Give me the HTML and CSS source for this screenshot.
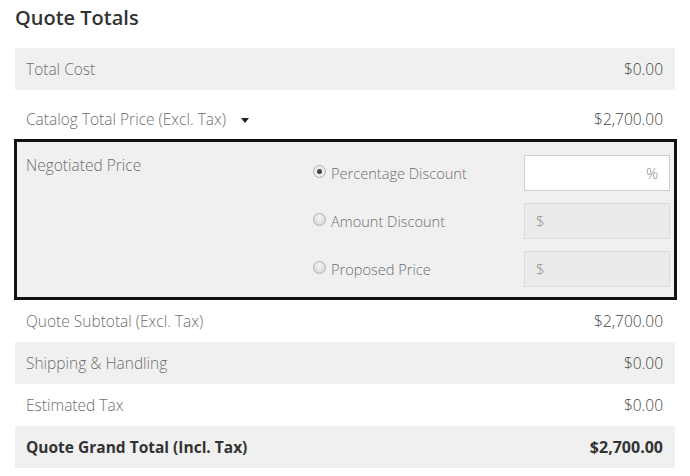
FILE: index.html
```html
<!DOCTYPE html>
<html>
<head>
<meta charset="utf-8">
<link rel="stylesheet" href="styles.css">
</head>
<body>
<div class="totals">
  <h2 class="title">Quote Totals</h2>
  <div class="rows">
    <div class="row shaded"><span class="label">Total Cost</span><span class="value">$0.00</span></div>
    <div class="row catalog"><span class="label">Catalog Total Price (Excl. Tax)<span class="caret"></span></span><span class="value">$2,700.00</span></div>
    <div class="negotiated">
      <div class="neg-label">Negotiated Price</div>
      <div class="options">
        <label class="opt"><span class="radio checked"></span>Percentage Discount</label>
        <div class="field white"><span class="suffix">%</span></div>
        <label class="opt"><span class="radio"></span>Amount Discount</label>
        <div class="field disabled"><span class="prefix">$</span></div>
        <label class="opt"><span class="radio"></span>Proposed Price</label>
        <div class="field disabled"><span class="prefix">$</span></div>
      </div>
    </div>
    <div class="row"><span class="label">Quote Subtotal (Excl. Tax)</span><span class="value">$2,700.00</span></div>
    <div class="row shaded"><span class="label">Shipping &amp; Handling</span><span class="value">$0.00</span></div>
    <div class="row"><span class="label">Estimated Tax</span><span class="value">$0.00</span></div>
    <div class="row shaded grand"><span class="label">Quote Grand Total (Incl. Tax)</span><span class="value">$2,700.00</span></div>
  </div>
</div>
</body>
</html>
```
FILE: styles.css
```css
* { box-sizing: border-box; }
html, body { margin: 0; padding: 0; background: #fff; }
body {
  font-family: "Open Sans", "Noto Sans", sans-serif;
  font-size: 15.5px;
  font-weight: 300;
  color: #6e6e6e;
}
.totals { padding: 4px 15px 0 15px; width: 690px; }
.title {
  margin: 0;
  font-size: 20px;
  font-weight: 600;
  color: #333;
  line-height: 28px;
}
.rows { margin-top: 16px; }
.row {
  display: flex;
  justify-content: space-between;
  align-items: center;
  height: 42px;
  padding: 0 12px 0 11px;
  line-height: 18px;
}
.row.shaded { background: #f0f0f0; }
.row.catalog { height: 49px; padding-top: 8px; }
.value { color: #444; font-weight: 300; }
.grand .label, .grand .value { font-weight: 700; color: #333; font-size: 15.5px; }
.grand .value { font-size: 16px; }
.caret {
  display: inline-block;
  margin-left: 15px;
  vertical-align: middle;
  width: 0; height: 0;
  border-left: 4px solid transparent;
  border-right: 4px solid transparent;
  border-top: 5px solid #222;
}
.negotiated {
  display: flex;
  margin: 0 -2px 0 -1px;
  border: 3px solid #111;
  background: #f0f0f0;
  padding: 13px 4px 10px 9px;
  height: 161px;
}
.neg-label { flex: 1; line-height: 18px; padding-top: 1px; }
.options {
  display: grid;
  grid-template-columns: 211px 146px;
  grid-auto-rows: 36px;
  row-gap: 12px;
  font-size: 14.6px;
}
.opt {
  display: flex;
  align-items: center;
  padding-bottom: 1px;
}
.radio {
  width: 13px; height: 13px;
  border-radius: 50%;
  border: 1px solid #b0b0b0;
  background: radial-gradient(circle at 50% 35%, #f4f4f4, #d2d2d2);
  margin-right: 5px;
  margin-top: -3px;
  position: relative;
}
.radio.checked { background: radial-gradient(circle, #fafafa, #e2e2e2); }
.radio.checked::after {
  content: "";
  position: absolute;
  left: 3px; top: 3px;
  width: 5px; height: 5px;
  border-radius: 50%;
  background: #444;
}
.field {
  display: flex;
  align-items: center;
  border: 1px solid #cfcfcf;
  color: #8a8a8a;
  padding: 0 11px;
  font-size: 15px;
}
.field.white { background: #fff; justify-content: flex-end; }
.field.disabled { background: #ebebeb; border-color: #dadada; }
```
